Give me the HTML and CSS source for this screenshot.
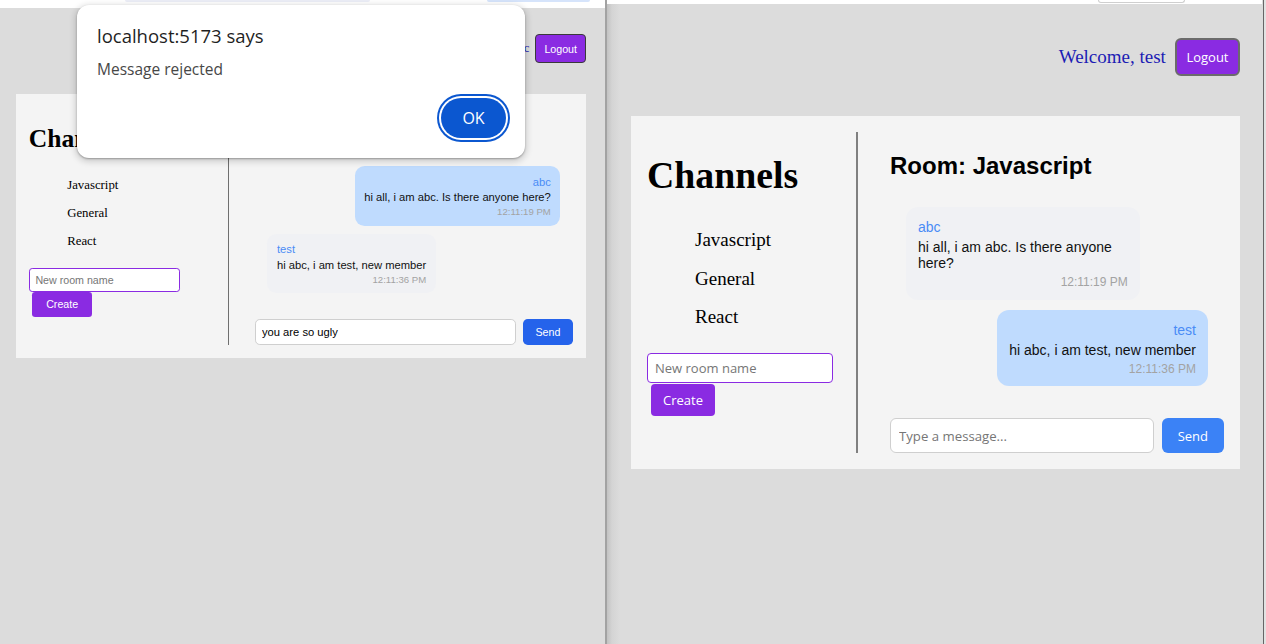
FILE: index.html
```html
<!DOCTYPE html>
<html lang="en">
<head>
<meta charset="utf-8">
<title>Chat</title>
<link rel="stylesheet" href="styles.css">
</head>
<body>
<div class="screen">
  <div class="win win-left">
    <div class="strip strip-left"><span class="pill pill-a"></span><span class="pill pill-b"></span></div>
    <div class="app app-left">
      <header class="topnav">
        <span class="welcome">Welcome, abc</span>
        <button class="btn btn-logout">Logout</button>
      </header>
      <section class="panel">
        <aside class="sidebar">
          <h1 class="side-title">Channels</h1>
          <ul class="rooms">
            <li>Javascript</li>
            <li>General</li>
            <li>React</li>
          </ul>
          <input class="room-input" type="text" placeholder="New room name">
          <button class="btn btn-create">Create</button>
        </aside>
        <main class="chat">
          <h2 class="room-title">Room: Javascript</h2>
          <div class="msgs">
            <div class="msg msg-own">
              <div class="msg-user">abc</div>
              <div class="msg-text">hi all, i am abc. Is there anyone here?</div>
              <div class="msg-time">12:11:19 PM</div>
            </div>
            <div class="msg msg-other">
              <div class="msg-user">test</div>
              <div class="msg-text">hi abc, i am test, new member</div>
              <div class="msg-time">12:11:36 PM</div>
            </div>
          </div>
          <div class="composer">
            <input class="msg-input" type="text" value="you are so ugly" placeholder="Type a message...">
            <button class="btn btn-send">Send</button>
          </div>
        </main>
      </section>
    </div>
    <div class="dialog">
      <p class="dialog-title">localhost:5173 says</p>
      <p class="dialog-msg">Message rejected</p>
      <div class="dialog-actions"><button class="btn-ok">OK</button></div>
    </div>
  </div>
  <div class="win-sep"></div>
  <div class="win win-right">
    <div class="strip strip-right"><span class="tab-box"></span></div>
    <div class="app app-right">
      <header class="topnav">
        <span class="welcome">Welcome, test</span>
        <button class="btn btn-logout">Logout</button>
      </header>
      <section class="panel">
        <aside class="sidebar">
          <h1 class="side-title">Channels</h1>
          <ul class="rooms">
            <li>Javascript</li>
            <li>General</li>
            <li>React</li>
          </ul>
          <input class="room-input" type="text" placeholder="New room name">
          <button class="btn btn-create">Create</button>
        </aside>
        <main class="chat">
          <h2 class="room-title">Room: Javascript</h2>
          <div class="msgs">
            <div class="msg msg-other">
              <div class="msg-user">abc</div>
              <div class="msg-text">hi all, i am abc. Is there anyone here?</div>
              <div class="msg-time">12:11:19 PM</div>
            </div>
            <div class="msg msg-own">
              <div class="msg-user">test</div>
              <div class="msg-text">hi abc, i am test, new member</div>
              <div class="msg-time">12:11:36 PM</div>
            </div>
          </div>
          <div class="composer">
            <input class="msg-input" type="text" placeholder="Type a message...">
            <button class="btn btn-send">Send</button>
          </div>
        </main>
      </section>
    </div>
  </div>
  <div class="win-edge"></div>
</div>
</body>
</html>
```

FILE: styles.css
```css
* { box-sizing: border-box; }
html, body { margin: 0; padding: 0; }
body {
  width: 1266px;
  height: 644px;
  overflow: hidden;
  background: #dcdcdc;
}
.screen { display: flex; height: 644px; }
.win { position: relative; height: 100%; background: #dcdcdc; }
.win-left { width: 605px; flex: none; }
.win-sep { width: 2px; flex: none; background: #a2a2a2; }
.win-right {
  width: 655px;
  flex: none;
  background: linear-gradient(to right, #c2c2c2 0, #d4d4d4 5px, #dcdcdc 13px);
}
.win-edge {
  width: 4px;
  flex: none;
  background: linear-gradient(to right, #dcdcdc 1px, #666 1px, #666 2px, #e2e2e2 2px);
}

/* browser chrome remnants */
.strip { display: flex; background: #fff; }
.strip-left { height: 8px; }
.strip-right { height: 4px; }
.pill { height: 2px; border-radius: 0 0 6px 6px; }
.pill-a { margin-left: 125px; width: 245px; background: #eceef7; }
.pill-b { margin-left: 117px; width: 103px; background: #d6e4fb; }
.tab-box {
  margin-left: 491px;
  width: 87px;
  height: 3px;
  border: 1px solid #cfcfcf;
  border-top: none;
  border-radius: 0 0 4px 4px;
}

/* app shared */
.app { display: flex; flex-direction: column; }
.topnav { display: flex; justify-content: flex-end; align-items: center; }
.welcome { color: #1c1cb4; }
.btn { color: #fff; cursor: pointer; line-height: 1; }
.btn-logout { background: #8a2be2; border-style: solid; }
.panel { display: flex; background: #f4f4f4; padding: 16px; }
.sidebar { flex: none; }
.side-title { color: #000; }
.rooms { list-style: none; padding: 0 0 0 48px; }
.rooms li { padding: 8px 0; color: #000; }
.room-input {
  display: block;
  border: 1px solid #8a2be2;
  background: #fff;
  border-radius: 4px;
  outline: none;
  color: #000;
}
.room-input::placeholder, .msg-input::placeholder { color: #767676; }
.btn-create {
  display: block;
  background: #8a2be2;
  border: none;
  border-radius: 4px;
}
.chat { flex: 1; min-width: 0; display: flex; flex-direction: column; padding-left: 32px; }
.room-title {
  font: 700 24px/normal "Liberation Sans", Arial, sans-serif;
  margin: 20px 0 27px;
  color: #000;
}
.msgs { display: flex; flex-direction: column; gap: 10px; }
.msg {
  max-width: 70%;
  margin: 0 16px;
  padding: 12px 12px 10.5px;
  border-radius: 12px;
  font-family: "Liberation Sans", Arial, sans-serif;
  line-height: normal;
}
.msg-other { align-self: flex-start; background: #f0f1f4; }
.msg-own { align-self: flex-end; background: #bfdbfe; text-align: right; }
.msg-user { font-size: 14px; color: #4a8cf6; margin-bottom: 4px; }
.msg-text { font-size: 14px; color: #111; }
.msg-time { font-size: 12px; color: #a3a3a3; margin-top: 4px; text-align: right; }
.composer { display: flex; gap: 8px; margin-top: 32px; }
.msg-input {
  flex: 1;
  min-width: 0;
  border: 1px solid #cfcfcf;
  border-radius: 6px;
  background: #fff;
  padding: 0 8px;
  outline: none;
  color: #000;
}
.btn-send { border: none; border-radius: 6px; padding: 0 16px; }

/* left window: page zoomed to 80% */
.app-left {
  zoom: 0.8;
  padding: 32.5px 23.75px 0 20px;
  font-family: "Liberation Serif", "Times New Roman", serif;
}
.app-left .topnav { gap: 7.5px; margin-bottom: 38.75px; }
.app-left .welcome { font-size: 16px; }
.app-left .btn-logout {
  height: 36.25px;
  padding: 0 10px;
  border-width: 1px;
  border-color: #3a3a3a;
  border-radius: 5px;
  font: 13.33px "Liberation Sans", Arial, sans-serif;
}
.app-left .sidebar { width: 249px; }
.app-left .side-title { font: 700 32px/normal "Liberation Serif", serif; margin: 21.44px 0; }
.app-left .rooms { margin: 22.5px 0 16.5px; }
.app-left .rooms li { font-size: 16px; line-height: normal; }
.app-left .room-input {
  width: 188.4px;
  height: 29.3px;
  padding: 0 7px;
  font: 13.33px "Liberation Sans", Arial, sans-serif;
}
.app-left .btn-create {
  height: 31.25px;
  padding: 0 17.7px;
  margin-left: 4px;
  font: 13.33px "Liberation Sans", Arial, sans-serif;
}
.app-left .chat { border-left: 2px solid #6f6f6f; }
.app-left .msg-input { height: 33px; font: 14px "Liberation Sans", Arial, sans-serif; }
.app-left .btn-send {
  height: 33px;
  background: #2563eb;
  font: 13.33px "Liberation Sans", Arial, sans-serif;
}

/* right window */
.app-right {
  padding: 34px 22px 0 24px;
  font-family: "Liberation Serif", "Times New Roman", serif;
}
.app-right .topnav { gap: 9px; margin-bottom: 40px; }
.app-right .welcome { font-size: 19px; }
.app-right .btn-logout {
  height: 38px;
  padding: 0 9.5px;
  border-width: 2px;
  border-color: #6b6b6b;
  border-radius: 6px;
  font: 13px "Open Sans", sans-serif;
}
.app-right .sidebar { width: 209px; }
.app-right .side-title { font: 700 37.8px/42px "Liberation Serif", serif; margin: 22px 0 0; }
.app-right .rooms { margin: 25.3px 0 16.2px; }
.app-right .rooms li { font-size: 19px; line-height: 22.5px; }
.app-right .room-input {
  width: 186px;
  height: 30px;
  padding: 0 7px;
  font: 13px "Open Sans", sans-serif;
}
.app-right .btn-create {
  height: 32px;
  margin: 1px 0 0 4px;
  padding: 0 12px;
  font: 13px "Open Sans", sans-serif;
}
.app-right .chat { border-left: 2px solid #808080; }
.app-right .msg-input { height: 35px; font: 13.2px "Open Sans", sans-serif; }
.app-right .btn-send { height: 35px; background: #3b82f6; font: 13px "Open Sans", sans-serif; }

/* alert dialog */
.dialog {
  position: absolute;
  left: 77px;
  top: 5px;
  width: 448px;
  height: 153px;
  background: #fff;
  border-radius: 12px;
  box-shadow: 0 1px 2px rgba(0, 0, 0, 0.3), 0 2px 6px 2px rgba(0, 0, 0, 0.15);
  padding: 18px 19px 0 20px;
  font-family: "Open Sans", sans-serif;
}
.dialog-title { font-size: 18.5px; line-height: normal; color: #1f1f1f; margin: 0 0 10px; }
.dialog-msg { font-size: 15.5px; line-height: normal; color: #474747; margin: 0; }
.dialog-actions { display: flex; justify-content: flex-end; margin-top: 17.5px; }
.btn-ok {
  width: 65px;
  height: 40px;
  border: none;
  border-radius: 20px;
  background: #0b57d0;
  color: #fff;
  font: 16px "Open Sans", sans-serif;
  box-shadow: 0 0 0 2px #fff, 0 0 0 4px #0b57d0;
}
```
